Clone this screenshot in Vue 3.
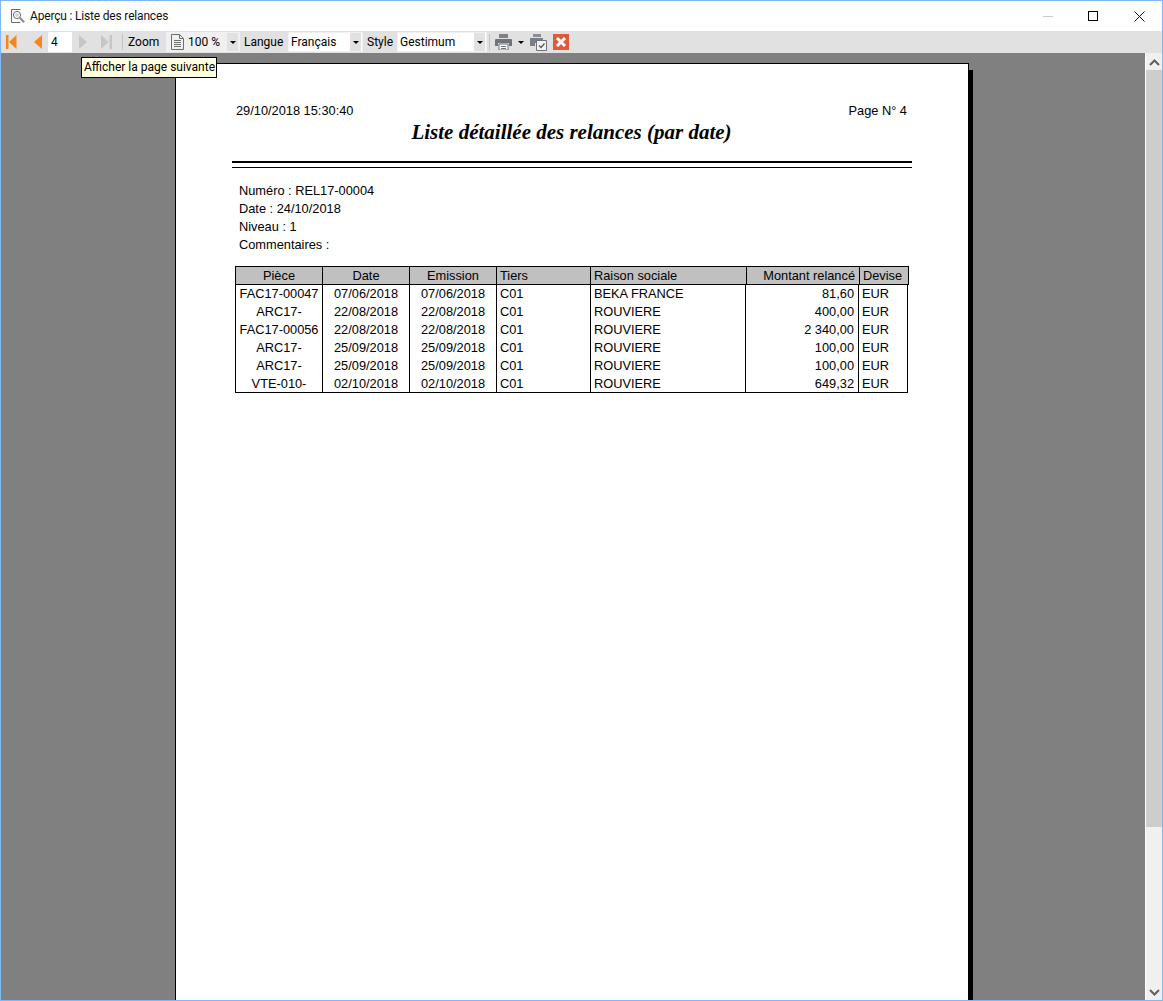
<script setup>
const columns = ['piece', 'date', 'emission', 'tiers', 'raison', 'montant', 'devise']
const header = [
  { key: 'piece', label: 'Pièce', cls: 'center' },
  { key: 'date', label: 'Date', cls: 'center' },
  { key: 'emission', label: 'Emission', cls: 'center' },
  { key: 'tiers', label: 'Tiers', cls: 'left' },
  { key: 'raison', label: 'Raison sociale', cls: 'left' },
  { key: 'montant', label: 'Montant relancé', cls: 'right' },
  { key: 'devise', label: 'Devise', cls: 'left' },
]
const rows = [
  ['FAC17-00047', '07/06/2018', '07/06/2018', 'C01', 'BEKA FRANCE', '81,60', 'EUR'],
  ['ARC17-', '22/08/2018', '22/08/2018', 'C01', 'ROUVIERE', '400,00', 'EUR'],
  ['FAC17-00056', '22/08/2018', '22/08/2018', 'C01', 'ROUVIERE', '2 340,00', 'EUR'],
  ['ARC17-', '25/09/2018', '25/09/2018', 'C01', 'ROUVIERE', '100,00', 'EUR'],
  ['ARC17-', '25/09/2018', '25/09/2018', 'C01', 'ROUVIERE', '100,00', 'EUR'],
  ['VTE-010-', '02/10/2018', '02/10/2018', 'C01', 'ROUVIERE', '649,32', 'EUR'],
]
const align = ['center', 'center', 'center', 'left', 'left', 'right', 'left']
</script>

<template>
  <div class="window">
    <div class="titlebar">
      <svg class="app-icon" width="16" height="16" viewBox="0 0 16 16" fill="none">
        <path d="M10.5 1.5H1.5v13h9" stroke="#6b6b6b" />
        <circle cx="7" cy="7" r="3.6" stroke="#6b6b6b" />
        <circle cx="7" cy="7" r="2" fill="#d5d5d5" />
        <path d="M9.8 9.8l4.4 4.4" stroke="#8a8a8a" stroke-width="2" />
      </svg>
      <span class="title">Aperçu : Liste des relances</span>
      <div class="winbtns">
        <span class="min"></span>
        <span class="max"></span>
        <svg class="close" width="11" height="11" viewBox="0 0 11 11" fill="none"><path d="M.5.5l10 10M10.5.5l-10 10" stroke="#111" /></svg>
      </div>
    </div>

    <div class="toolbar">
      <svg class="ic first" width="11" height="14" viewBox="0 0 11 14"><path d="M0 0h2.5v14H0z" fill="#f7861a" /><path d="M10.5 0v14L3 7z" fill="#f7861a" /></svg>
      <svg class="ic prev" width="9" height="14" viewBox="0 0 9 14"><path d="M9 0v14L1 7z" fill="#f7861a" /></svg>
      <span class="pageinput">4</span>
      <svg class="ic next" width="8" height="14" viewBox="0 0 8 14"><path d="M0 0v14l8-7z" fill="#c6c6c6" /></svg>
      <svg class="ic last" width="11" height="14" viewBox="0 0 11 14"><path d="M0 0v14l7.5-7z" fill="#c6c6c6" /><path d="M8.5 0H11v14H8.5z" fill="#c6c6c6" /></svg>
      <span class="sep sep-a"></span>
      <span class="lbl zoom-lbl">Zoom</span>
      <div class="combo zoom-combo">
        <svg class="doc" width="13" height="16" viewBox="0 0 13 16" fill="none">
          <path d="M.5.5h8l4 4v11H.5z" stroke="#6f6f6f" />
          <path d="M8.5.5v4h4M3 6.5h7M3 8.5h7M3 10.5h7M3 12.5h7" stroke="#6f6f6f" />
        </svg>
        <span class="zoom-val">100 %</span>
        <span class="drop"></span>
      </div>
      <span class="lbl langue-lbl">Langue</span>
      <div class="combo langue-combo"><span class="val">Français</span><span class="drop"></span></div>
      <span class="lbl style-lbl">Style</span>
      <div class="combo style-combo"><span class="val">Gestimum</span><span class="drop"></span></div>
      <span class="sep sep-b"></span>
      <svg class="ic printer" width="17" height="16" viewBox="0 0 17 16">
        <path d="M4 0h9v4H4z" fill="#7d8186" />
        <path d="M1 5h15q1 0 1 1v6h-3V9H3v3H0V6q0-1 1-1z" fill="#6f747a" />
        <path d="M4 10h9v6H4z" fill="#fff" stroke="#6f747a" />
        <path d="M6 12.5h5M6 14.5h5" stroke="#6f747a" />
      </svg>
      <span class="caret printcaret"></span>
      <svg class="ic printcheck" width="18" height="18" viewBox="0 0 18 18" fill="none">
        <path d="M4 1h8v3H4z" fill="#8b8f94" />
        <path d="M1 5h13v5H6v3H1z" fill="#7a7f85" />
        <path d="M7.5 7.5h10v10h-10z" fill="#f2f2f2" stroke="#6f747a" />
        <path d="M10 12.5l2 2 3.5-4" stroke="#555" stroke-width="1.2" />
      </svg>
      <svg class="ic closebtn" width="16" height="16" viewBox="0 0 16 16">
        <path d="M0 0h16v16H0z" fill="#de5b39" />
        <path d="M4 4l8 8M12 4l-8 8" stroke="#fff" stroke-width="3" />
      </svg>
    </div>

    <div class="body">
      <div class="canvas">
        <div class="page">
          <div class="meta-row"><span>29/10/2018 15:30:40</span><span>Page N° 4</span></div>
          <h1>Liste détaillée des relances (par date)</h1>
          <div class="rule"></div>
          <div class="info">
            <div>Numéro : REL17-00004</div>
            <div>Date : 24/10/2018</div>
            <div>Niveau : 1</div>
            <div>Commentaires :</div>
          </div>
          <div class="table">
            <div class="head">
              <div v-for="h in header" :key="h.key" :class="['cell', h.key, h.cls]">{{ h.label }}</div>
            </div>
            <div class="rows">
              <div v-for="(row, i) in rows" :key="i" class="row">
                <div v-for="(v, j) in row" :key="j" :class="['cell', columns[j], align[j]]">{{ v }}</div>
              </div>
            </div>
          </div>
        </div>
        <div class="shadow"></div>

        <div class="tooltip">Afficher la page suivante</div>
      </div>
      <div class="scrollbar">
        <svg class="arrow" width="11" height="7" viewBox="0 0 11 7" fill="none"><path d="M1 6l4.5-4.5L10 6" stroke="#606060" stroke-width="2" /></svg>
        <div class="thumb"></div>
        <div class="track"></div>
        <svg class="arrow" width="11" height="7" viewBox="0 0 11 7" fill="none"><path d="M1 1l4.5 4.5L10 1" stroke="#606060" stroke-width="2" /></svg>
      </div>
    </div>
  </div>
</template>

<style>
html, body { margin: 0; background: #fff; }
</style>

<style scoped>
.window {
  width: 1163px;
  height: 1001px;
  box-sizing: border-box;
  border: 1px solid #7fb9f5;
  display: flex;
  flex-direction: column;
  overflow: hidden;
  font-family: Roboto, "Noto Sans", sans-serif;
  color: #000;
}
.titlebar {
  height: 30px;
  flex: none;
  display: flex;
  align-items: center;
  background: #fff;
}
.app-icon { margin-left: 9px; }
.title { margin-left: 4px; font-size: 12px; letter-spacing: -.18px; color: #111; }
.winbtns { margin-left: auto; display: flex; align-items: center; }
.min { width: 10px; height: 1px; background: #c8c8c8; margin-right: 35px; }
.max { width: 8px; height: 8px; border: 1px solid #000; margin-right: 36px; }
.close { margin-right: 17px; }

.toolbar {
  height: 22px;
  flex: none;
  display: flex;
  align-items: center;
  background: #e1e1e1;
  font-size: 12px;
}
.ic { flex: none; }
.first { margin-left: 5px; }
.prev { margin-left: 16px; }
.pageinput {
  margin-left: 6px;
  width: 21px;
  height: 20px;
  padding-left: 3px;
  line-height: 20px;
  background: #fff;
}
.next { margin-left: 7px; }
.last { margin-left: 14px; }
.sep { width: 1px; height: 16px; background: #c2c2c2; flex: none; }
.sep-a { margin-left: 10px; }
.lbl { flex: none; }
.zoom-lbl { margin-left: 5px; width: 33px; }
.combo {
  display: flex;
  align-items: center;
  flex: none;
  box-sizing: border-box;
  background: #fff;
  border: 1px solid #f0f0f0;
  position: relative;
}
.zoom-combo { margin-left: 5px; width: 74px; height: 20px; background: #f0f0f0; }
.doc { margin-left: 4px; }
.zoom-val { margin-left: 4px; }
.drop {
  position: absolute;
  right: 1px;
  top: 0;
  bottom: 0;
  width: 11px;
  background: #e1e1e1;
}
.drop::after, .caret {
  content: "";
  border-left: 3px solid transparent;
  border-right: 3px solid transparent;
  border-top: 3px solid #000;
}
.drop::after { position: absolute; left: 3px; top: 50%; margin-top: -1px; }
.langue-lbl { margin-left: 4px; width: 41px; }
.langue-combo { margin-left: 3px; width: 75px; height: 20px; }
.style-lbl { margin-left: 4px; width: 27px; }
.style-combo { margin-left: 3px; width: 90px; height: 20px; }
.val { margin-left: 2px; }
.sep-b { margin-left: 2px; }
.printer { margin-left: 5px; }
.caret { width: 0; height: 0; margin-left: 6px; flex: none; }
.printcheck { margin-left: 5px; }
.closebtn { margin-left: 6px; }

.body { flex: 1; display: flex; min-height: 0; }
.canvas {
  flex: 1;
  position: relative;
  background: #808080;
  padding: 10px 0 0 174px;
  display: flex;
  overflow: hidden;
}
.page {
  width: 794px;
  height: 960px;
  box-sizing: border-box;
  flex: none;
  background: #fff;
  border: 1px solid #000;
  border-bottom: 0;
  padding: 39px 0 0 60px;
  font-family: "Liberation Sans", Arial, sans-serif;
  font-size: 12.8px;
  color: #000;
}
.shadow { width: 4px; margin-top: 7px; background: #000; height: 960px; flex: none; }
.meta-row {
  display: flex;
  justify-content: space-between;
  width: 671px;
  line-height: 15px;
}
h1 {
  margin: 2px 0 0;
  width: 671px;
  text-align: center;
  font: italic bold 21px/24px "Liberation Serif", "Times New Roman", serif;
}
.rule {
  margin: 17px 0 0 -4px;
  width: 680px;
  border-top: 2px solid #000;
  border-bottom: 1px solid #000;
  padding-bottom: 2px;
  box-sizing: content-box;
  height: 2px;
}
.info { margin: 14px 0 0 3px; line-height: 18px; }
.table { margin: 12px 0 0 -1px; width: 674px; }
.head {
  display: flex;
  height: 17px;
  background: #c0c0c0;
  border: 1px solid #000;
  box-sizing: content-box;
  width: 672px;
  line-height: 17px;
}
.head .cell { border-right: 1px solid #000; }
.head .cell:last-child { border-right: 0; }
.rows {
  width: 673px;
  height: 108px;
  box-sizing: border-box;
  overflow: hidden;
  border-left: 1px solid #000;
  border-right: 1px solid #000;
  border-bottom: 1px solid #000;
}
.row { display: flex; height: 18px; line-height: 18px; }
.row .cell { border-right: 1px solid #000; }
.row .cell:last-child { border-right: 0; }
.cell { box-sizing: border-box; flex: none; white-space: nowrap; overflow: hidden; }
.center { text-align: center; }
.left { padding-left: 3px; }
.right { text-align: right; padding-right: 4px; }
.piece { width: 87px; }
.date { width: 87px; }
.emission { width: 87px; }
.tiers { width: 94px; }
.raison { width: 155px; }
.montant { width: 113px; }
.devise { width: 48px; }
.head .raison { width: 156px; }
.head .devise { width: 47px; }

.tooltip {
  position: absolute;
  left: 80px;
  top: 4px;
  width: 136px;
  height: 21px;
  line-height: 19px;
  box-sizing: border-box;
  padding: 0 2px;
  border: 1px solid #000;
  background: #ffffe1;
  font-size: 12px;
  white-space: nowrap;
}
.scrollbar {
  width: 17px;
  flex: none;
  box-sizing: border-box;
  border-left: 1px solid #fff;
  background: #f0f0f0;
  display: flex;
  flex-direction: column;
  align-items: center;
}
.arrow { margin: 6px 0 4px; flex: none; }
.thumb { width: 100%; height: 757px; background: #cdcdcd; flex: none; }
.track { flex: 1; }
</style>
